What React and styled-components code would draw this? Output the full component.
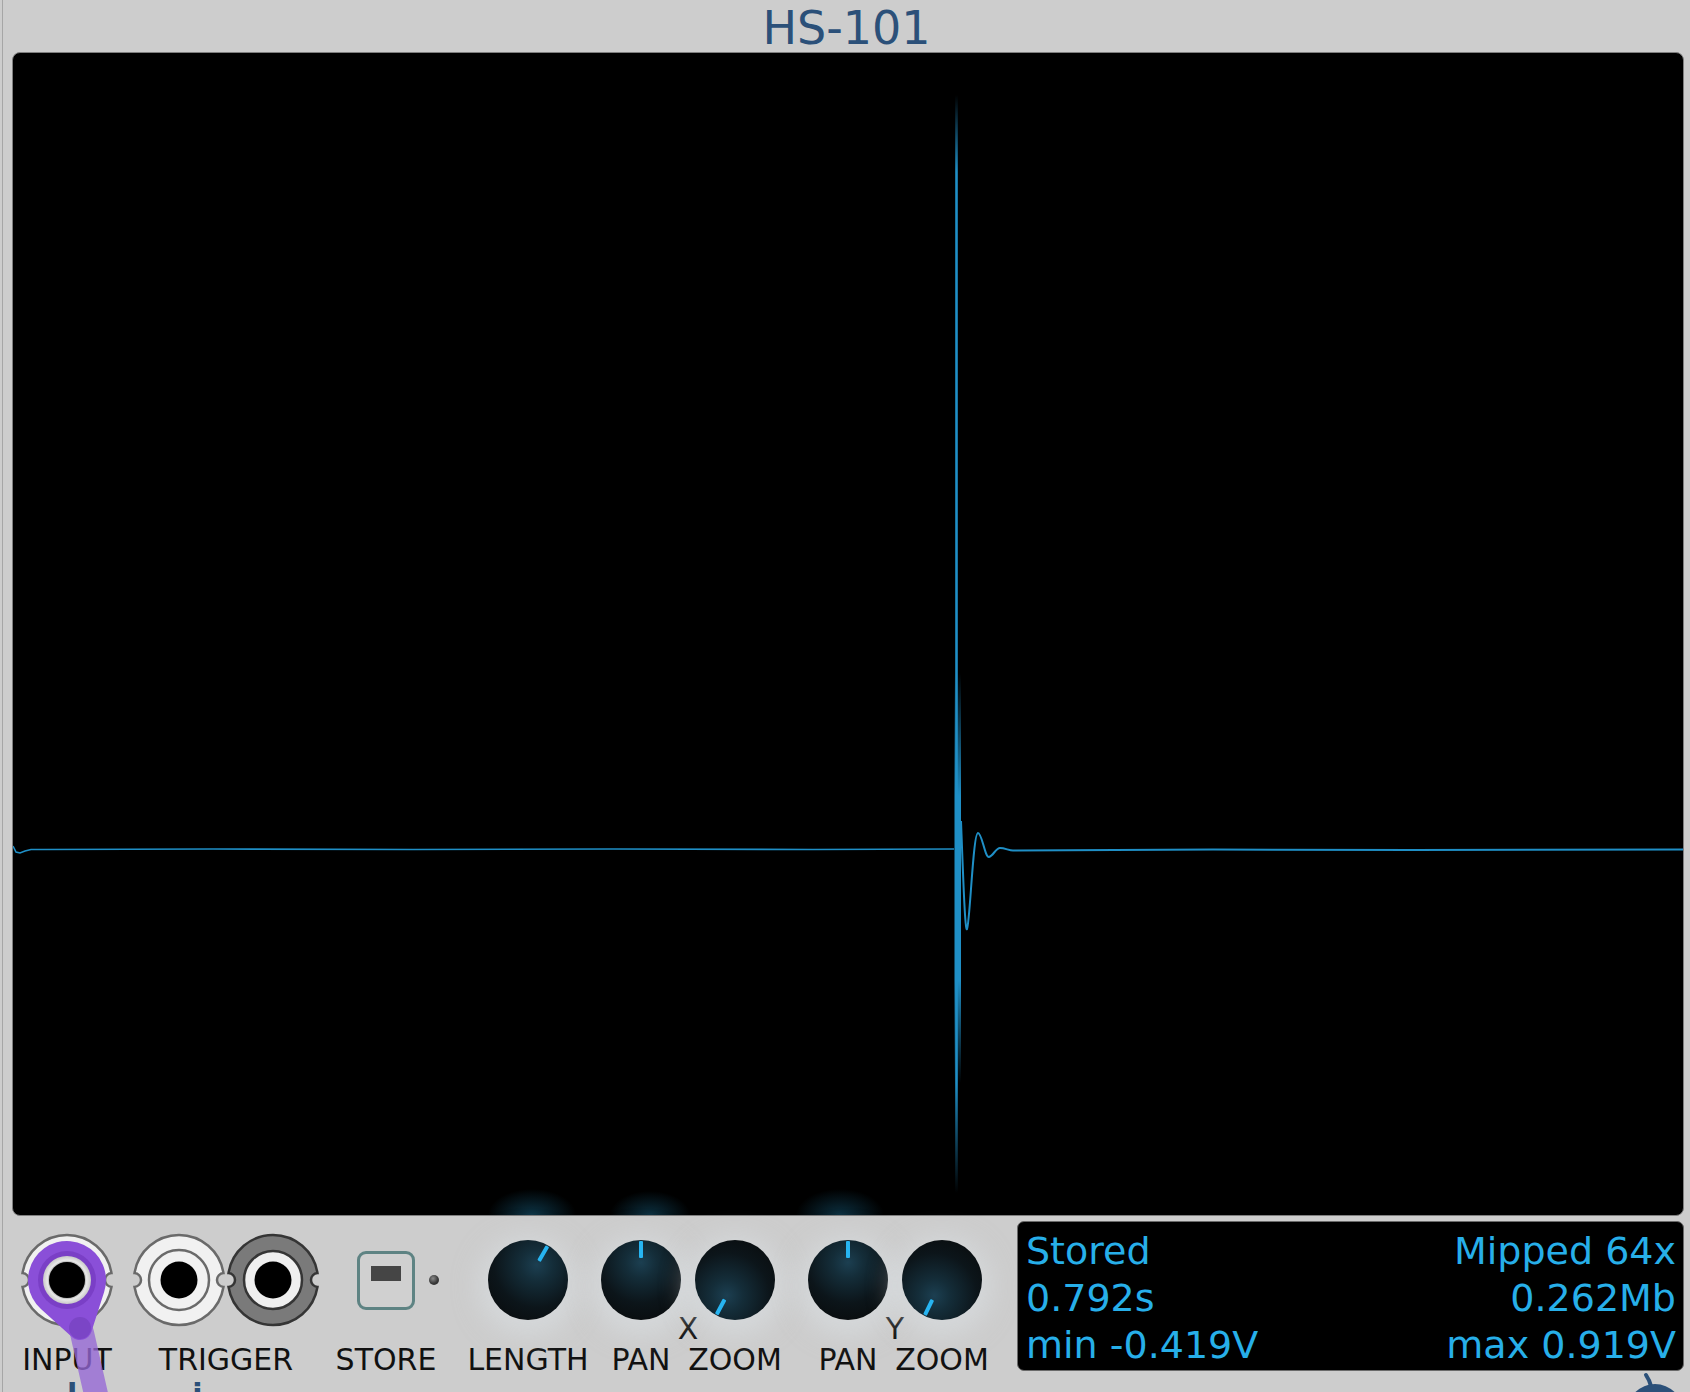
import React from 'react';
import styled, { createGlobalStyle } from 'styled-components';

const GlobalStyle = createGlobalStyle`
  html, body {
    margin: 0;
    padding: 0;
    background: #cdcdcd;
  }
  body {
    font-family: "DejaVu Sans", "Liberation Sans", sans-serif;
    overflow: hidden;
  }
`;

const Page = styled.div`
  width: 1688px;
  height: 1392px;
  margin-left: 2px;
  box-sizing: border-box;
  border-left: 1px solid #a6a6a6;
  display: flex;
  flex-direction: column;
  overflow: hidden;
  & > * {
    flex-shrink: 0;
  }
`;

const Title = styled.div`
  height: 52px;
  line-height: 56px;
  text-align: center;
  font-size: 46px;
  color: #2b5079;
`;

const Screen = styled.div`
  position: relative;
  height: 1164px;
  margin: 0 6px 0 9px;
  box-sizing: border-box;
  border: 1px solid #7f7f7f;
  border-radius: 8px;
  overflow: hidden;
  background:
    radial-gradient(ellipse 44px 26px at 519px 100%, rgba(24, 96, 128, 0.55), rgba(24, 96, 128, 0) 100%),
    radial-gradient(ellipse 40px 24px at 637px 100%, rgba(24, 96, 128, 0.5), rgba(24, 96, 128, 0) 100%),
    radial-gradient(ellipse 44px 26px at 827px 100%, rgba(24, 96, 128, 0.5), rgba(24, 96, 128, 0) 100%),
    #000;
`;

const Trace = styled.svg`
  position: absolute;
  inset: 0;
  width: 100%;
  height: 100%;
`;

const ControlsRow = styled.div`
  display: flex;
  align-items: flex-start;
  height: 162px;
  padding-left: 9px;
`;

const Cell = styled.div`
  display: flex;
  flex-direction: column;
  align-items: center;
  width: ${p => p.$w}px;
  margin-left: ${p => p.$ml || 0}px;
  padding-top: 17px;
  flex-shrink: 0;
`;

const ControlArea = styled.div`
  height: 94px;
  display: flex;
  align-items: center;
  justify-content: ${p => (p.$start ? 'flex-start' : 'center')};
  align-self: stretch;
  padding-left: ${p => p.$pl || 0}px;
  gap: ${p => p.$gap || 0}px;
`;

const Slot = styled.div`
  width: 94px;
  display: flex;
  justify-content: center;
`;

const Label = styled.div`
  font-size: 30px;
  line-height: 36px;
  margin-top: ${p => (p.$mt === undefined ? 15 : p.$mt)}px;
  color: #111;
  white-space: nowrap;
  text-align: center;
  width: ${p => (p.$w ? `${p.$w}px` : 'auto')};
`;

const AxisLabel = styled.div`
  font-size: 30px;
  line-height: 26px;
  margin-top: -11px;
  color: #111;
`;

const LabelRow = styled.div`
  display: flex;
`;

const JackSvg = styled.svg`
  width: 94px;
  height: 94px;
  overflow: visible;
  position: relative;
  z-index: ${p => (p.$top ? 2 : 0)};
`;

const StoreButton = styled.div`
  width: 58px;
  height: 59px;
  box-sizing: border-box;
  border: 3px solid #5e8383;
  border-radius: 9px;
  background: #d0d0d0;
  display: flex;
  justify-content: center;
  padding-top: 12px;
`;

const StoreMark = styled.div`
  width: 30px;
  height: 15px;
  background: #454545;
`;

const Led = styled.div`
  width: 10px;
  height: 10px;
  border-radius: 50%;
  background: radial-gradient(circle at 40% 35%, #8a8a8a, #3a3a3a 55%, #262626);
`;

const rad = a => (a * Math.PI) / 180;

const KnobBody = styled.div`
  position: relative;
  width: 80px;
  height: 80px;
  border-radius: 50%;
  background: radial-gradient(
    circle at ${p => 50 + 22 * Math.sin(rad(p.$angle))}% ${p => 50 - 22 * Math.cos(rad(p.$angle))}%,
    #1c3f51 0%,
    #142d39 22%,
    #0c151a 58%,
    #080909 100%
  );
  box-shadow: 0 6px 24px 10px rgba(222, 228, 231, 0.5);
`;

const Pointer = styled.span`
  position: absolute;
  left: 38px;
  top: 0;
  width: 4px;
  height: 40px;
  transform-origin: 2px 40px;
  transform: rotate(${p => p.$angle}deg);
  &::before {
    content: '';
    position: absolute;
    left: 0;
    top: 1px;
    width: 4px;
    height: 17px;
    background: #27b4f1;
    border-radius: 1px;
  }
`;

const InfoBox = styled.div`
  margin: 5px 6px 0 auto;
  width: 667px;
  height: 150px;
  box-sizing: border-box;
  border: 1px solid #6a6a6a;
  border-radius: 7px;
  background: #000;
  padding: 7px 7px 0 8px;
  display: grid;
  grid-template-columns: 1fr 1fr;
  font-size: 38px;
  line-height: 45px;
  color: #27afe9;
`;

const InfoCell = styled.div`
  text-align: ${p => (p.$right ? 'right' : 'left')};
  white-space: nowrap;
`;

const Footer = styled.div`
  display: flex;
  align-items: flex-start;
  height: 14px;
  padding-top: 2px;
  font-size: 30px;
  font-weight: bold;
  line-height: 30px;
  color: #2b5079;
`;

const Glimpse = styled.span`
  margin-left: ${p => p.$ml}px;
`;

const Logo = styled.svg`
  margin-left: auto;
  margin-top: -8px;
  width: 64px;
  height: 40px;
  flex-shrink: 0;
`;

const bodyPath =
  'M 2.544 40.02 A 45 45 0 0 1 91.456 40.02 A 7 7 0 0 0 91.456 53.98 A 45 45 0 0 1 2.544 53.98 A 7 7 0 0 0 2.544 40.02 Z';

function Jack({ dark }) {
  return (
    <JackSvg viewBox="0 0 94 94">
      <path d={bodyPath} fill={dark ? '#7a7a7a' : '#f1f1f1'} stroke={dark ? '#353535' : '#6a6a6a'} strokeWidth="2.5" />
      <circle cx="47" cy="47" r={dark ? 29 : 30} fill={dark ? '#efefef' : '#f1f1f1'} stroke={dark ? '#353535' : '#6a6a6a'} strokeWidth="2.5" />
      <circle cx="47" cy="47" r="18.5" fill="#000" />
    </JackSvg>
  );
}

function PluggedJack() {
  return (
    <JackSvg viewBox="0 0 94 94" $top>
      <defs>
        <radialGradient id="ring" cx="50%" cy="50%" r="50%">
          <stop offset="70%" stopColor="#8c8c8c" />
          <stop offset="82%" stopColor="#e9e9e9" />
          <stop offset="100%" stopColor="#c9c9c9" />
        </radialGradient>
      </defs>
      <path d={bodyPath} fill="#f1f1f1" stroke="#6a6a6a" strokeWidth="2.5" />
      <line x1="62" y1="100" x2="78" y2="170" stroke="rgba(150, 104, 214, 0.78)" strokeWidth="24" strokeLinecap="round" />
      <path
        d="M 20.95 76.02 A 39 39 0 1 1 84.13 58.9 L 71.42 98.66 A 12 12 0 0 1 51.98 103.93 Z"
        fill="#8a4fd8"
      />
      <circle cx="60" cy="95" r="11" fill="#7b45c6" />
      <circle cx="47" cy="47" r="29" fill="#7a3fc6" />
      <circle cx="47" cy="47" r="24" fill="url(#ring)" />
      <circle cx="47" cy="47" r="18" fill="#000" />
    </JackSvg>
  );
}

function Knob({ angle }) {
  return (
    <KnobBody $angle={angle}>
      <Pointer $angle={angle} />
    </KnobBody>
  );
}

function KnobPair({ axis, ml, panAngle, zoomAngle }) {
  return (
    <Cell $w={188} $ml={ml}>
      <ControlArea>
        <Slot><Knob angle={panAngle} /></Slot>
        <Slot><Knob angle={zoomAngle} /></Slot>
      </ControlArea>
      <AxisLabel>{axis}</AxisLabel>
      <LabelRow>
        <Label $mt={0} $w={94}>PAN</Label>
        <Label $mt={0} $w={94}>ZOOM</Label>
      </LabelRow>
    </Cell>
  );
}

function Waveform() {
  return (
    <Trace viewBox="0 0 1670 1162" preserveAspectRatio="none">
      <defs>
        <linearGradient id="spike" gradientUnits="userSpaceOnUse" x1="0" y1="42" x2="0" y2="1140">
          <stop offset="0" stopColor="#1f8fc6" stopOpacity="0" />
          <stop offset="0.07" stopColor="#1f8fc6" stopOpacity="1" />
          <stop offset="0.9" stopColor="#1f8fc6" stopOpacity="1" />
          <stop offset="1" stopColor="#1f8fc6" stopOpacity="0" />
        </linearGradient>
        <linearGradient id="band" gradientUnits="userSpaceOnUse" x1="0" y1="620" x2="0" y2="1030">
          <stop offset="0" stopColor="#1f8fc6" stopOpacity="0" />
          <stop offset="0.3" stopColor="#1f8fc6" stopOpacity="1" />
          <stop offset="0.75" stopColor="#1f8fc6" stopOpacity="1" />
          <stop offset="1" stopColor="#1f8fc6" stopOpacity="0" />
        </linearGradient>
      </defs>
      <path
        d="M 0 793 L 3 799 L 7 800 L 12 798 L 18 796.5 L 30 796.5 L 200 796 L 400 796.5 L 600 796 L 800 796.5 L 941 796"
        fill="none"
        stroke="#1f8fc6"
        strokeWidth="1.6"
      />
      <line x1="943.5" y1="42" x2="943.5" y2="1140" stroke="url(#spike)" strokeWidth="2.6" />
      <rect x="941.5" y="620" width="6.5" height="410" fill="url(#band)" />
      <path
        d="M 948 768 C 950 820, 952 880, 954 876 C 957 870, 960 780, 965 780 C 969 780, 972 805, 976 804 C 980 803, 983 795, 987 795 C 992 795, 996 797.5, 1000 797.5 L 1200 796.5 L 1400 797 L 1670 796.5"
        fill="none"
        stroke="#1f8fc6"
        strokeWidth="2"
      />
    </Trace>
  );
}

export default function App() {
  return (
    <>
      <GlobalStyle />
      <Page>
        <Title>HS-101</Title>
        <Screen>
          <Waveform />
        </Screen>
        <ControlsRow>
          <Cell $w={110}>
            <ControlArea>
              <PluggedJack />
            </ControlArea>
            <Label>INPUT</Label>
          </Cell>
          <Cell $w={208}>
            <ControlArea>
              <Jack />
              <Jack dark />
            </ControlArea>
            <Label>TRIGGER</Label>
          </Cell>
          <Cell $w={112}>
            <ControlArea $start $pl={27} $gap={14}>
              <StoreButton>
                <StoreMark />
              </StoreButton>
              <Led />
            </ControlArea>
            <Label>STORE</Label>
          </Cell>
          <Cell $w={132} $ml={20}>
            <ControlArea>
              <Knob angle={30} />
            </ControlArea>
            <Label>LENGTH</Label>
          </Cell>
          <KnobPair axis="X" panAngle={0} zoomAngle={208} />
          <KnobPair axis="Y" ml={19} panAngle={0} zoomAngle={206} />
          <InfoBox>
            <InfoCell>Stored</InfoCell>
            <InfoCell $right>Mipped 64x</InfoCell>
            <InfoCell>0.792s</InfoCell>
            <InfoCell $right>0.262Mb</InfoCell>
            <InfoCell>min -0.419V</InfoCell>
            <InfoCell $right>max 0.919V</InfoCell>
          </InfoBox>
        </ControlsRow>
        <Footer>
          <Glimpse $ml={64}>l</Glimpse>
          <Glimpse $ml={115}>i</Glimpse>
          <Logo viewBox="0 0 64 40">
            <path d="M 25 14 C 24 10, 22 6, 20 3" stroke="#2b5079" strokeWidth="4" fill="none" strokeLinecap="round" />
            <circle cx="29" cy="40" r="28" fill="#2b5079" />
          </Logo>
        </Footer>
      </Page>
    </>
  );
}
